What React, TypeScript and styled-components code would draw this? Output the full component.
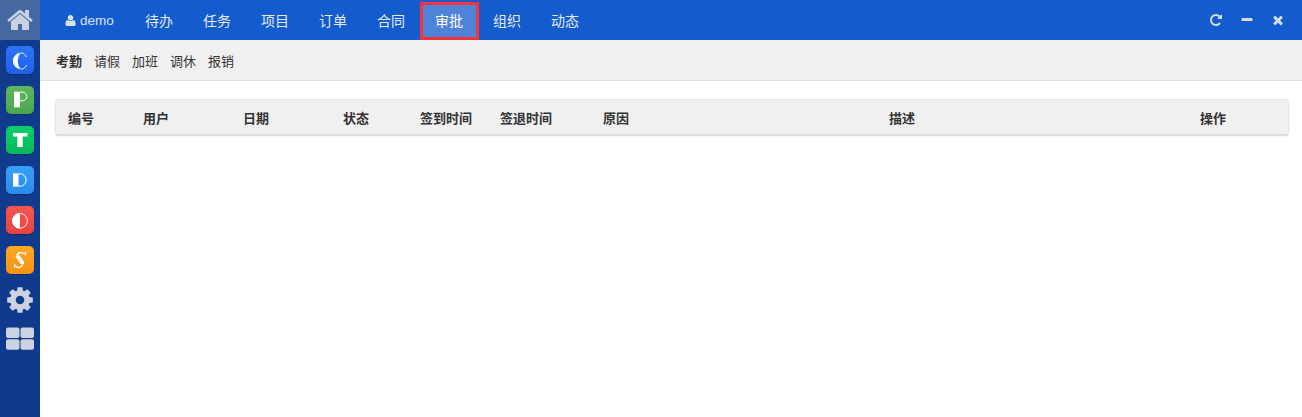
import React from 'react';
import styled, { createGlobalStyle } from 'styled-components';

const GlobalStyle = createGlobalStyle`
  html, body {
    margin: 0;
    height: 100%;
    background: #fff;
  }
  body {
    font-family: "Liberation Sans", "Noto Sans CJK SC", sans-serif;
    font-size: 13px;
    color: #333;
  }
  #root {
    height: 100%;
  }
`;

const Shell = styled.div`
  display: flex;
  height: 100vh;
  overflow: hidden;
`;

const Sidebar = styled.aside`
  flex: 0 0 40px;
  display: flex;
  flex-direction: column;
  align-items: center;
  background: #103b8d;
`;

const HomeLink = styled.a`
  width: 40px;
  height: 40px;
  display: flex;
  align-items: center;
  justify-content: center;
  background: #44689f;
  color: #c9d2e2;
`;

const AppList = styled.div`
  display: flex;
  flex-direction: column;
  align-items: center;
  gap: 12px;
  padding-top: 6px;
`;

const AppTile = styled.a<{ $from: string; $to: string }>`
  width: 28px;
  height: 28px;
  display: block;
  border-radius: 5px;
  background: linear-gradient(${p => p.$from}, ${p => p.$to});
  box-shadow: 0 1px 1px rgba(0, 0, 0, 0.25);
`;

const ToolLink = styled.a<{ $top: number }>`
  margin-top: ${p => p.$top}px;
  display: flex;
  color: #cbd3e1;
`;

const Main = styled.main`
  flex: 1;
  min-width: 0;
  display: flex;
  flex-direction: column;
`;

const TopBar = styled.nav`
  height: 40px;
  padding-left: 10px;
  display: flex;
  align-items: stretch;
  background: #145ccd;
`;

const UserLink = styled.a`
  width: 80px;
  padding-left: 14px;
  box-sizing: border-box;
  display: flex;
  align-items: center;
  gap: 3px;
  color: #d9e2f3;
  font-size: 13.5px;
`;

const NavItem = styled.a<{ $active?: boolean }>`
  width: ${p => (p.$active ? 59 : 58)}px;
  margin: ${p => (p.$active ? '2px -1px 0 0' : '0')};
  padding: ${p => (p.$active ? '0 1px 2px 0' : '0')};
  box-sizing: border-box;
  display: flex;
  align-items: center;
  justify-content: center;
  font-size: 14px;
  color: ${p => (p.$active ? '#fff' : '#e4eaf6')};
  background: ${p => (p.$active ? '#4f83d9' : 'transparent')};
  border: ${p => (p.$active ? '3px solid #fb3338' : 'none')};
`;

const WindowTools = styled.div`
  margin-left: auto;
  padding: 0 17px 1px 0;
  display: flex;
  align-items: center;
  gap: 17px;
  color: #d5dbe6;
`;

const SubBar = styled.div`
  height: 41px;
  box-sizing: border-box;
  padding-left: 10px;
  display: flex;
  align-items: center;
  background: #f0f0f0;
  border-bottom: 1px solid #dfdfdf;
`;

const SubItem = styled.a<{ $active?: boolean }>`
  padding: 0 6px;
  font-size: 13px;
  color: #333;
  font-weight: ${p => (p.$active ? 700 : 400)};
`;

const Content = styled.section`
  padding: 18px 13px 0 15px;
`;

const TableHead = styled.div`
  height: 37px;
  box-sizing: border-box;
  display: grid;
  grid-template-columns: 75px 100px 100px 77px 80px 103px 286px 311px 1fr;
  align-items: center;
  background: #f0f0f0;
  border: 1px solid #e3e3e3;
  border-bottom: 2px solid #dcdcdc;
  border-radius: 4px;
  box-shadow: 0 1px 2px rgba(0, 0, 0, 0.06);
`;

const HeadCell = styled.div`
  padding-left: 12px;
  font-size: 13px;
  font-weight: 700;
  color: #333;
`;

const Icon = ({ d, size }: { d: string; size: number }) => (
  <svg width={size} height={size} viewBox="0 0 1792 1792" fill="currentColor">
    <path d={d} />
  </svg>
);

const HOME = 'M1472 992v480q0 26-19 45t-45 19h-384v-384h-256v384h-384q-26 0-45-19t-19-45v-480q0-1 .5-3t.5-3l575-474 575 474q1 2 1 6zm223-69l-62 74q-8 9-21 11h-3q-13 0-21-7l-692-577-692 577q-12 8-24 7-13-2-21-11l-62-74q-8-10-7-23.500t11-21.500l719-599q32-26 76-26t76 26l244 204v-195q0-14 9-23t23-9h192q14 0 23 9t9 23v408l219 182q10 8 11 21.500t-7 23.500z';
const COG = 'M1152 896q0-106-75-181t-181-75-181 75-75 181 75 181 181 75 181-75 75-181zm512-109v222q0 12-8 23t-20 13l-185 28q-19 54-39 91 35 50 107 138 10 12 10 25t-9 23q-27 37-99 108t-94 71q-12 0-26-9l-138-108q-44 23-91 38-16 136-29 186-7 28-36 28h-222q-14 0-24.500-8.500t-11.500-21.500l-28-184q-49-16-90-37l-141 107q-10 9-25 9-14 0-25-11-126-114-165-168-7-10-7-23 0-12 8-23 15-21 51-66.500t54-70.500q-27-50-41-99l-183-27q-13-2-21-12.500t-8-23.500v-222q0-12 8-23t19-13l186-28q14-46 39-92-40-57-107-138-10-12-10-24 0-10 9-23 26-36 98.500-107.500t94.500-71.500q13 0 26 10l138 107q44-23 91-38 16-136 29-186 7-28 36-28h222q14 0 24.500 8.500t11.500 21.500l28 184q49 16 90 37l142-107q9-9 24-9 13 0 25 10 129 119 165 170 7 8 7 22 0 12-8 23-15 21-51 66.500t-54 70.500q26 50 41 98l183 28q13 2 21 12.500t8 23.500z';
const REPEAT = 'M1664 256v448q0 26-19 45t-45 19h-448q-42 0-59-40-17-39 14-69l138-138q-148-137-349-137-104 0-198.500 40.500t-163.500 109.500-109.500 163.500-40.500 198.500 40.500 198.500 109.500 163.500 163.500 109.500 198.500 40.500q119 0 225-52t179-147q7-10 23-12 15 0 25 9l137 138q9 8 9.500 20.500t-7.500 22.500q-109 132-264 204.500t-327 72.500q-156 0-298-61t-245-164-164-245-61-298 61-298 164-245 245-164 298-61q147 0 284.500 55.500t244.500 156.500l130-129q29-31 70-14 39 17 39 59z';
const MINUS = 'M1600 736v192q0 40-28 68t-68 28h-1216q-40 0-68-28t-28-68v-192q0-40 28-68t68-28h1216q40 0 68 28t28 68z';
const TIMES = 'M1490 1322q0 40-28 68l-136 136q-28 28-68 28t-68-28l-294-294-294 294q-28 28-68 28t-68-28l-136-136q-28-28-28-68t28-68l294-294-294-294q-28-28-28-68t28-68l136-136q28-28 68-28t68 28l294 294 294-294q28-28 68-28t68 28l136 136q28 28 28 68t-28 68l-294 294 294 294q28 28 28 68z';
const USER = 'M1600 1405q0 120-73 189.500t-194 69.500h-874q-121 0-194-69.500t-73-189.500q0-53 3.500-103.500t14-109 26.500-108.500 43-97.500 62-81 85.500-53.500 111.500-20q9 0 42 21.500t74.500 48 108 48 133.500 21.500 133.500-21.500 108-48 74.500-48 42-21.500q61 0 111.500 20t85.500 53.500 62 81 43 97.500 26.500 108.500 14 109 3.500 103.500zm-320-893q0 159-112.500 271.500t-271.500 112.500-271.500-112.500-112.500-271.500 112.500-271.500 271.500-112.500 271.500 112.500 112.500 271.500z';

// the six app logos, all on a 28x28 tile
const LogoC = () => (
  <svg width="28" height="28" viewBox="0 0 28 28" fill="none">
    <path d="M15 6.800A8.200 8.200 0 1 0 15 23.200C12.800 21 11.800 18.200 11.800 15S12.800 9 15 6.800Z" fill="#fff" />
    <path d="M15 6.800C17.500 7 19.500 8.500 20.500 11M20.500 19C19.500 21.500 17.500 23 15 23.200" stroke="#fff" strokeWidth="0.900" />
  </svg>
);
const LogoP = () => (
  <svg width="28" height="28" viewBox="0 0 28 28" fill="none">
    <path d="M8 5.700H14V21.300H8Z" fill="#fff" />
    <path d="M14 6.200H16.500A4.300 4.300 0 0 1 16.500 14.800H14" stroke="#fff" strokeWidth="1" />
  </svg>
);
const LogoT = () => (
  <svg width="28" height="28" viewBox="0 0 28 28">
    <path d="M7 7H21.500V10.500H16.700V21H11.300V10.500H7Z" fill="#fff" />
  </svg>
);
const LogoD = () => (
  <svg width="28" height="28" viewBox="0 0 28 28" fill="none">
    <path d="M7 7.300H12.500V20.700H7Z" fill="#fff" />
    <path d="M12.500 7.800H14A6.200 6.200 0 0 1 14 20.200H12.500" stroke="#fff" strokeWidth="1" />
  </svg>
);
const LogoO = () => (
  <svg width="28" height="28" viewBox="0 0 28 28" fill="none">
    <path d="M14 7A7.800 7.800 0 0 0 14 22.600Z" fill="#fff" />
    <circle cx="14" cy="14.800" r="7.400" stroke="#fff" strokeWidth="0.900" />
  </svg>
);
const LogoS = () => (
  <svg width="28" height="28" viewBox="0 0 28 28" fill="none">
    <path d="M11.500 9.500C12 12.500 16.500 14.500 16.200 18" stroke="#fff" strokeWidth="4" />
    <path d="M11 10C11 6.500 16 5.500 19 8M16.500 18C16 22 11.500 22.500 9 19.500" stroke="#fff" strokeWidth="1.400" />
    <path d="M19.500 5.500V10M8.500 17.500V22" stroke="#fff" strokeWidth="0.800" />
  </svg>
);
const Grid = () => (
  <svg width="28" height="24" viewBox="0 0 28 24" fill="currentColor">
    <rect x="0" y="0.500" width="13.500" height="10.500" rx="2" />
    <rect x="14.500" y="0.500" width="13.500" height="10.500" rx="2" />
    <rect x="0" y="12.300" width="13.500" height="10.500" rx="2" />
    <rect x="14.500" y="12.300" width="13.500" height="10.500" rx="2" />
  </svg>
);

const apps = [
  { from: '#2b74f7', to: '#1f62ea', logo: <LogoC /> },
  { from: '#5cb860', to: '#4ca650', logo: <LogoP /> },
  { from: '#0ace6a', to: '#08b95c', logo: <LogoT /> },
  { from: '#37a0f6', to: '#2a8cec', logo: <LogoD /> },
  { from: '#f55650', to: '#e8423f', logo: <LogoO /> },
  { from: '#ffa826', to: '#f79210', logo: <LogoS /> },
];

const navItems = ['待办', '任务', '项目', '订单', '合同', '审批', '组织', '动态'];
const subItems = ['考勤', '请假', '加班', '调休', '报销'];
const columns = ['编号', '用户', '日期', '状态', '签到时间', '签退时间', '原因', '描述', '操作'];

export default function App() {
  return (
    <Shell>
      <GlobalStyle />
      <Sidebar>
        <HomeLink>
          <Icon d={HOME} size={28} />
        </HomeLink>
        <AppList>
          {apps.map((app, i) => (
            <AppTile key={i} $from={app.from} $to={app.to}>
              {app.logo}
            </AppTile>
          ))}
        </AppList>
        <ToolLink $top={11}>
          <Icon d={COG} size={30} />
        </ToolLink>
        <ToolLink $top={12}>
          <Grid />
        </ToolLink>
      </Sidebar>
      <Main>
        <TopBar>
          <UserLink>
            <Icon d={USER} size={13} />
            demo
          </UserLink>
          {navItems.map(name => (
            <NavItem key={name} $active={name === '审批'}>
              {name}
            </NavItem>
          ))}
          <WindowTools>
            <Icon d={REPEAT} size={14} />
            <Icon d={MINUS} size={14} />
            <Icon d={TIMES} size={14} />
          </WindowTools>
        </TopBar>
        <SubBar>
          {subItems.map(name => (
            <SubItem key={name} $active={name === '考勤'}>
              {name}
            </SubItem>
          ))}
        </SubBar>
        <Content>
          <TableHead>
            {columns.map(name => (
              <HeadCell key={name}>{name}</HeadCell>
            ))}
          </TableHead>
        </Content>
      </Main>
    </Shell>
  );
}
